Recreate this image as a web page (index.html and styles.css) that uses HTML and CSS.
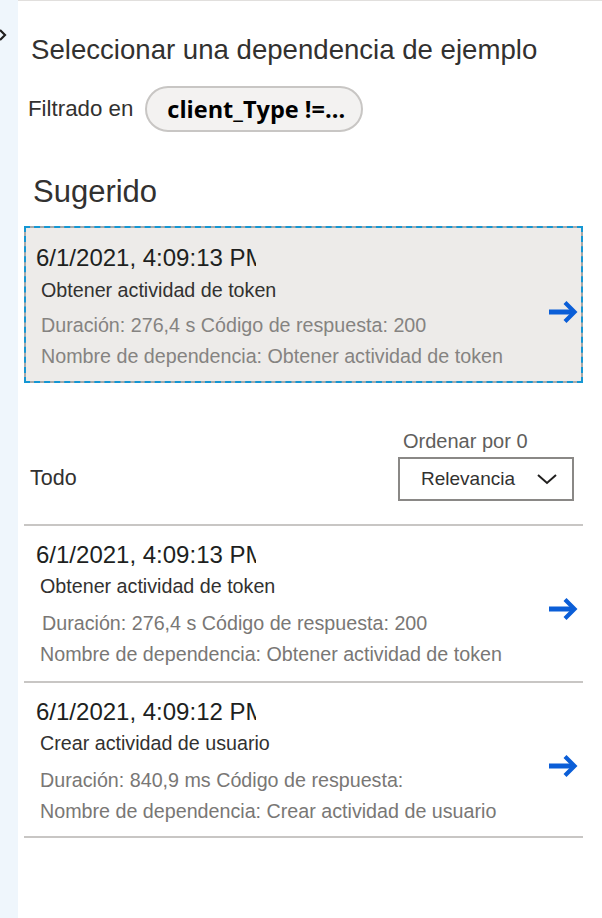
FILE: index.html
```html
<!DOCTYPE html>
<html lang="es">
<head>
<meta charset="utf-8">
<title>Seleccionar una dependencia de ejemplo</title>
<link rel="stylesheet" href="styles.css">
</head>
<body>
<div class="layout">
  <aside class="rail">
    <svg class="rail-chevron" width="10" height="14" viewBox="0 0 10 14"><path d="M2 2 L7 7 L2 12" fill="none" stroke="#201f1e" stroke-width="2.2"/></svg>
  </aside>
  <main class="panel">
    <h1 class="title">Seleccionar una dependencia de ejemplo</h1>
    <div class="filter-row">
      <span class="filter-label">Filtrado en</span>
      <span class="pill">client_Type !=...</span>
    </div>
    <h2 class="section">Sugerido</h2>
    <div class="card card-suggested">
      <div class="card-text">
        <div class="date">6/1/2021, 4:09:13 PM</div>
        <div class="name">Obtener actividad de token</div>
        <div class="meta meta-dur">Duración: 276,4 s Código de respuesta: 200</div>
        <div class="meta">Nombre de dependencia: Obtener actividad de token</div>
      </div>
      <svg class="arrow" width="29" height="24" viewBox="0 0 29 24"><rect x="0" y="9.5" width="24" height="5" fill="#0b5ed7"/><path d="M16 2.5 L25.5 12 L16 21.5" fill="none" stroke="#0b5ed7" stroke-width="4.2"/></svg>
    </div>
    <div class="all-row">
      <span class="all-label">Todo</span>
      <div class="sort">
        <div class="sort-label">Ordenar por 0</div>
        <div class="dropdown">
          <span>Relevancia</span>
          <svg width="22" height="14" viewBox="0 0 22 14"><path d="M2 3 L11 11 L20 3" fill="none" stroke="#201f1e" stroke-width="2"/></svg>
        </div>
      </div>
    </div>
    <div class="list">
      <div class="card item">
        <div class="card-text">
          <div class="date">6/1/2021, 4:09:13 PM</div>
          <div class="name">Obtener actividad de token</div>
          <div class="meta meta-dur meta-a">Duración: 276,4 s Código de respuesta: 200</div>
          <div class="meta">Nombre de dependencia: Obtener actividad de token</div>
        </div>
        <svg class="arrow" width="29" height="24" viewBox="0 0 29 24"><rect x="0" y="9.5" width="24" height="5" fill="#0b5ed7"/><path d="M16 2.5 L25.5 12 L16 21.5" fill="none" stroke="#0b5ed7" stroke-width="4.2"/></svg>
      </div>
      <div class="card item">
        <div class="card-text">
          <div class="date">6/1/2021, 4:09:12 PM</div>
          <div class="name">Crear actividad de usuario</div>
          <div class="meta meta-dur">Duración: 840,9 ms Código de respuesta:</div>
          <div class="meta">Nombre de dependencia: Crear actividad de usuario</div>
        </div>
        <svg class="arrow" width="29" height="24" viewBox="0 0 29 24"><rect x="0" y="9.5" width="24" height="5" fill="#0b5ed7"/><path d="M16 2.5 L25.5 12 L16 21.5" fill="none" stroke="#0b5ed7" stroke-width="4.2"/></svg>
      </div>
    </div>
  </main>
</div>
</body>
</html>
```

FILE: styles.css
```css
* { box-sizing: border-box; }
html, body { margin: 0; padding: 0; background: #ffffff; }
body {
  width: 602px;
  height: 918px;
  overflow: hidden;
  font-family: "Liberation Sans", Arial, sans-serif;
  color: #323130;
}
.layout { display: flex; height: 918px; }
.rail {
  width: 18px;
  flex: none;
  background: #eff6fc;
  padding-top: 28px;
}
.rail-chevron { display: block; margin-left: -2px; }
.panel {
  flex: 1;
  border-top: 1px solid #e1dfdd;
  padding: 0 19px 0 6px;
}
.title {
  margin: 32px 0 0 7px;
  font-size: 27.6px;
  line-height: 34px;
  font-weight: normal;
  color: #323130;
  white-space: nowrap;
}
.filter-row {
  display: flex;
  align-items: center;
  gap: 12px;
  margin-top: 19px;
  margin-left: 4px;
}
.filter-label { font-size: 22.3px; color: #323130; }
.pill {
  height: 46px;
  display: inline-flex;
  align-items: center;
  padding: 0 16px 0 20px;
  border: 2px solid #c8c6c4;
  border-radius: 23px;
  background: #f3f2f1;
  font-family: "Open Sans", "Noto Sans", sans-serif;
  font-weight: 700;
  font-size: 23.5px;
  color: #000000;
}
.section {
  margin: 42px 0 0 9px;
  font-size: 31px;
  line-height: 36px;
  font-weight: normal;
  color: #323130;
}
.card {
  display: flex;
  align-items: center;
  justify-content: space-between;
}
.card-suggested {
  margin-top: 16px;
  border: 2px dashed #1597d3;
  background: linear-gradient(#edebe9, #edebe9) padding-box, #a9a9a9 border-box;
  padding: 14px 3px 9px 10px;
}
.card-text { display: flex; flex-direction: column; }
.date {
  font-size: 24px;
  line-height: 32px;
  color: #201f1e;
  width: 220px;
  overflow: hidden;
  white-space: nowrap;
}
.name {
  margin-left: 5px;
  font-size: 19.7px;
  line-height: 32px;
  color: #323130;
}
.meta {
  margin-left: 5px;
  font-size: 19.7px;
  line-height: 31px;
  color: #797775;
}
.card-suggested .meta-dur { margin-top: 3px; line-height: 32px; }
.card-suggested .meta { color: #858381; }
.arrow { flex: none; display: block; margin-top: 9px; }
.all-row {
  display: flex;
  justify-content: space-between;
  align-items: flex-end;
  margin-top: 46px;
  padding: 0 9px 23px 6px;
  border-bottom: 2px solid #c8c6c4;
}
.all-label { font-size: 21.5px; line-height: 26px; margin-bottom: 10px; color: #323130; }
.sort { display: flex; flex-direction: column; align-items: flex-start; }
.sort-label { font-size: 20px; line-height: 24px; color: #605e5c; margin-left: 5px; margin-bottom: 4px; }
.dropdown {
  width: 176px;
  height: 44px;
  border: 2px solid #8a8886;
  display: flex;
  align-items: center;
  justify-content: space-between;
  padding: 0 14px 0 21px;
  font-size: 19px;
  color: #323130;
}
.item {
  border-bottom: 2px solid #c8c6c4;
  padding: 13px 5px 12px 12px;
}
.item:last-child { padding-bottom: 10px; }
.item .name { margin-left: 4px; line-height: 30px; }
.item .meta { margin-left: 4px; line-height: 30px; }
.item .meta-dur { margin-top: 6px; line-height: 32px; }
.item .meta-a { margin-left: 6px; }
```
